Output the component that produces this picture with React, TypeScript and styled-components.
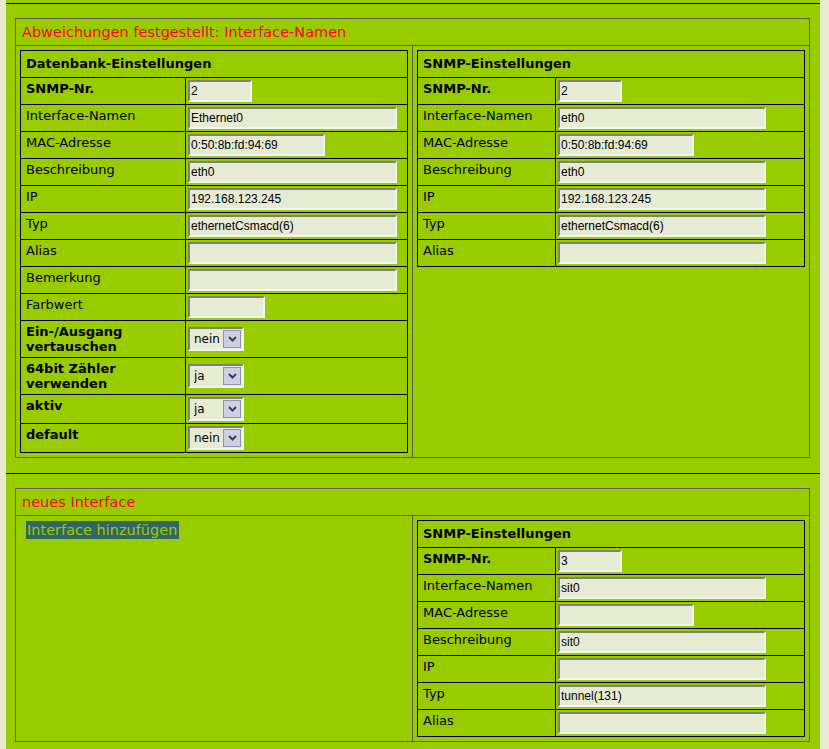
import * as React from 'react';
import styled, { createGlobalStyle } from 'styled-components';

const GREEN = '#99cc00';
const PALE = '#e6ebd1';
const FRAME = '#5c5c5c';

const GlobalStyle = createGlobalStyle`
  body {
    margin: 0;
    background: ${PALE};
    font-family: "DejaVu Sans", Verdana, sans-serif;
    color: #000;
  }
`;

const Page = styled.div`
  margin-left: 6px;
  width: 814px;
  min-height: 100vh;
  background: ${GREEN};
  padding-top: 3px;
  box-sizing: border-box;
  display: flow-root;
`;

const Rule = styled.div`
  border-top: 1px solid #000;
`;

const Box = styled.section`
  margin: 14px 10px 15px 9px;
  border: 1px solid ${FRAME};
`;

const BoxTitle = styled.div`
  height: 26px;
  line-height: 26px;
  padding-left: 6px;
  color: #ff0000;
  font-size: 14.5px;
  border-bottom: 1px solid ${FRAME};
`;

const Halves = styled.div`
  display: grid;
  grid-template-columns: 397px 396px;
`;

const Half = styled.div`
  padding: 4px;
  &:first-child {
    border-right: 1px solid ${FRAME};
  }
`;

const FormTable = styled.div<{ $label: number }>`
  display: grid;
  grid-template-columns: ${(p) => p.$label}px 1fr;
  border-left: 1px solid #000;
  border-top: 1px solid #000;
  font-size: 13px;
`;

const Cell = styled.div`
  border-right: 1px solid #000;
  border-bottom: 1px solid #000;
`;

const HeadCell = styled(Cell)`
  grid-column: 1 / -1;
  height: 26px;
  line-height: 26px;
  padding: 0 5px;
  font-weight: bold;
`;

const LabelCell = styled(Cell)<{ $strong?: boolean }>`
  padding: 3px 5px;
  line-height: 15px;
  font-weight: ${(p) => (p.$strong ? 'bold' : 'normal')};
`;

const ValueCell = styled(Cell)`
  padding: 2px;
  display: flex;
  align-items: center;
`;

const TextInput = styled.input<{ $w: number }>`
  width: ${(p) => p.$w}px;
  height: 22px;
  box-sizing: border-box;
  margin: 0;
  padding: 0 1px;
  border: 2px solid;
  border-color: #808080 #f4f4f4 #f4f4f4 #808080;
  background: #e6ebd3;
  font-family: "Liberation Sans", Arial, sans-serif;
  font-size: 12px;
  color: #000;
  outline: none;
`;

const SelectFrame = styled.span`
  display: inline-flex;
  width: 56px;
  height: 24px;
  box-sizing: border-box;
  padding: 1px 1px 1px 0;
  border: 2px solid;
  border-color: #808080 #f4f4f4 #f4f4f4 #808080;
  background: #e6ebd3;
`;

const NativeSelect = styled.select`
  appearance: none;
  flex: 1;
  min-width: 0;
  border: 0;
  margin: 0;
  padding: 0 0 0 4px;
  background: transparent;
  font-family: "DejaVu Sans", Verdana, sans-serif;
  font-size: 12px;
  color: #000;
  outline: none;
`;

const ArrowBox = styled.span`
  width: 16px;
  display: flex;
  align-items: center;
  justify-content: center;
  background: #ccd0e2;
  border: 1px solid #9094ad;
`;

const AddButton = styled.a`
  display: inline-block;
  margin: 0 0 0 6px;
  padding: 0 2px 0 1px;
  height: 18px;
  line-height: 18px;
  background: #336666;
  color: ${GREEN};
  font-size: 14.5px;
  text-decoration: none;
`;

type Field =
  | { label: React.ReactNode; strong?: boolean; kind: 'text'; width: number; value: string }
  | { label: React.ReactNode; strong?: boolean; kind: 'select'; value: string };

const YesNo: React.FC<{ value: string }> = ({ value }) => (
  <SelectFrame>
    <NativeSelect defaultValue={value}>
      <option value="ja">ja</option>
      <option value="nein">nein</option>
    </NativeSelect>
    <ArrowBox>
      <svg width="9" height="6" viewBox="0 0 9 6">
        <path d="M1 1 L4.5 4.5 L8 1" fill="none" stroke="#404040" strokeWidth="2" />
      </svg>
    </ArrowBox>
  </SelectFrame>
);

const SettingsTable: React.FC<{ title: string; labelWidth: number; fields: Field[] }> = ({
  title,
  labelWidth,
  fields,
}) => (
  <FormTable $label={labelWidth}>
    <HeadCell>{title}</HeadCell>
    {fields.map((f, i) => (
      <React.Fragment key={i}>
        <LabelCell $strong={f.strong}>{f.label}</LabelCell>
        <ValueCell>
          {f.kind === 'text' ? (
            <TextInput $w={f.width} defaultValue={f.value} />
          ) : (
            <YesNo value={f.value} />
          )}
        </ValueCell>
      </React.Fragment>
    ))}
  </FormTable>
);

const snmpFields = (
  nr: string,
  name: string,
  mac: string,
  descr: string,
  ip: string,
  type: string
): Field[] => [
  { label: 'SNMP-Nr.', strong: true, kind: 'text', width: 64, value: nr },
  { label: 'Interface-Namen', kind: 'text', width: 208, value: name },
  { label: 'MAC-Adresse', kind: 'text', width: 136, value: mac },
  { label: 'Beschreibung', kind: 'text', width: 208, value: descr },
  { label: 'IP', kind: 'text', width: 208, value: ip },
  { label: 'Typ', kind: 'text', width: 208, value: type },
  { label: 'Alias', kind: 'text', width: 208, value: '' },
];

const dbFields: Field[] = [
  { label: 'SNMP-Nr.', strong: true, kind: 'text', width: 64, value: '2' },
  { label: 'Interface-Namen', kind: 'text', width: 209, value: 'Ethernet0' },
  { label: 'MAC-Adresse', kind: 'text', width: 137, value: '0:50:8b:fd:94:69' },
  { label: 'Beschreibung', kind: 'text', width: 209, value: 'eth0' },
  { label: 'IP', kind: 'text', width: 209, value: '192.168.123.245' },
  { label: 'Typ', kind: 'text', width: 209, value: 'ethernetCsmacd(6)' },
  { label: 'Alias', kind: 'text', width: 209, value: '' },
  { label: 'Bemerkung', kind: 'text', width: 209, value: '' },
  { label: 'Farbwert', kind: 'text', width: 77, value: '' },
  { label: <>Ein-/Ausgang<br />vertauschen</>, strong: true, kind: 'select', value: 'nein' },
  { label: <>64bit Zähler<br />verwenden</>, strong: true, kind: 'select', value: 'ja' },
  { label: 'aktiv', strong: true, kind: 'select', value: 'ja' },
  { label: 'default', strong: true, kind: 'select', value: 'nein' },
];

const App: React.FC = () => (
  <>
    <GlobalStyle />
    <Page>
      <Rule />
      <Box>
        <BoxTitle>Abweichungen festgestellt: Interface-Namen</BoxTitle>
        <Halves>
          <Half>
            <SettingsTable title="Datenbank-Einstellungen" labelWidth={165} fields={dbFields} />
          </Half>
          <Half>
            <SettingsTable
              title="SNMP-Einstellungen"
              labelWidth={138}
              fields={snmpFields('2', 'eth0', '0:50:8b:fd:94:69', 'eth0', '192.168.123.245', 'ethernetCsmacd(6)')}
            />
          </Half>
        </Halves>
      </Box>
      <Rule />
      <Box>
        <BoxTitle>neues Interface</BoxTitle>
        <Halves>
          <Half>
            <AddButton href="#">Interface hinzufügen</AddButton>
          </Half>
          <Half>
            <SettingsTable
              title="SNMP-Einstellungen"
              labelWidth={138}
              fields={snmpFields('3', 'sit0', '', 'sit0', '', 'tunnel(131)')}
            />
          </Half>
        </Halves>
      </Box>
    </Page>
  </>
);

export default App;
